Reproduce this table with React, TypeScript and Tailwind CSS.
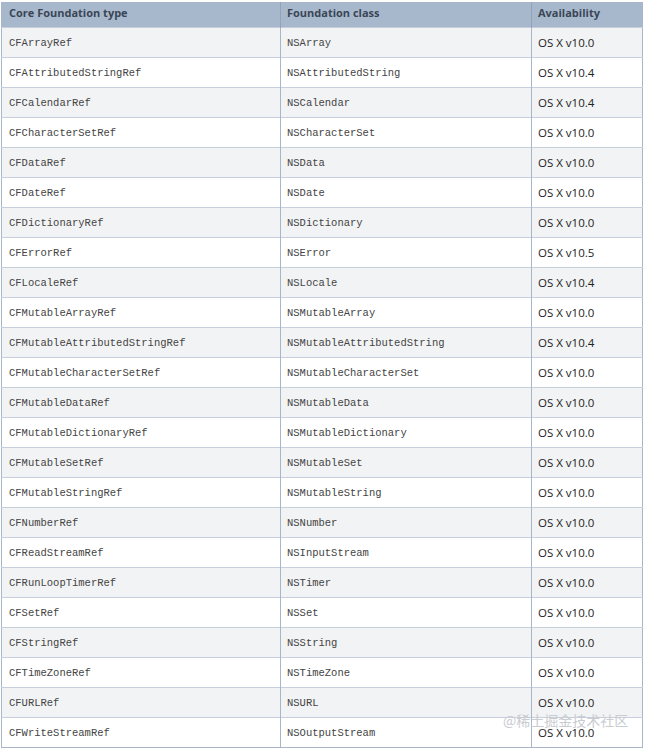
const ROWS: [string, string, string][] = [
  ['CFArrayRef', 'NSArray', 'OS X v10.0'],
  ['CFAttributedStringRef', 'NSAttributedString', 'OS X v10.4'],
  ['CFCalendarRef', 'NSCalendar', 'OS X v10.4'],
  ['CFCharacterSetRef', 'NSCharacterSet', 'OS X v10.0'],
  ['CFDataRef', 'NSData', 'OS X v10.0'],
  ['CFDateRef', 'NSDate', 'OS X v10.0'],
  ['CFDictionaryRef', 'NSDictionary', 'OS X v10.0'],
  ['CFErrorRef', 'NSError', 'OS X v10.5'],
  ['CFLocaleRef', 'NSLocale', 'OS X v10.4'],
  ['CFMutableArrayRef', 'NSMutableArray', 'OS X v10.0'],
  ['CFMutableAttributedStringRef', 'NSMutableAttributedString', 'OS X v10.4'],
  ['CFMutableCharacterSetRef', 'NSMutableCharacterSet', 'OS X v10.0'],
  ['CFMutableDataRef', 'NSMutableData', 'OS X v10.0'],
  ['CFMutableDictionaryRef', 'NSMutableDictionary', 'OS X v10.0'],
  ['CFMutableSetRef', 'NSMutableSet', 'OS X v10.0'],
  ['CFMutableStringRef', 'NSMutableString', 'OS X v10.0'],
  ['CFNumberRef', 'NSNumber', 'OS X v10.0'],
  ['CFReadStreamRef', 'NSInputStream', 'OS X v10.0'],
  ['CFRunLoopTimerRef', 'NSTimer', 'OS X v10.0'],
  ['CFSetRef', 'NSSet', 'OS X v10.0'],
  ['CFStringRef', 'NSString', 'OS X v10.0'],
  ['CFTimeZoneRef', 'NSTimeZone', 'OS X v10.0'],
  ['CFURLRef', 'NSURL', 'OS X v10.0'],
  ['CFWriteStreamRef', 'NSOutputStream', 'OS X v10.0'],
]

export default function App() {
  return (
    <div className="relative h-[749px] w-[645px] overflow-hidden bg-white pl-[1px] pt-[2px]">
      <table className="w-[641px] table-fixed border-collapse border border-[#a9b6c8]">
        <colgroup>
          <col className="w-[279px]" />
          <col className="w-[251px]" />
          <col className="w-[111px]" />
        </colgroup>
        <thead>
          <tr className="h-[25px] bg-[#a8b8cc] text-left font-['Open_Sans','Liberation_Sans',sans-serif] text-[11px] font-bold text-[#3a4656]">
            <th className="border-r border-[#93a3b8] px-[7px] pb-[4px] align-middle">Core Foundation type</th>
            <th className="border-r border-[#93a3b8] px-[6px] pb-[4px] align-middle">Foundation class</th>
            <th className="px-[6px] pb-[4px] align-middle">Availability</th>
          </tr>
        </thead>
        <tbody>
          {ROWS.map(([cf, ns, av], i) => (
            <tr
              key={cf}
              className={`h-[30px] border-t border-[#c6cfdb] ${i % 2 === 0 ? 'bg-[#f2f3f4]' : 'bg-white'}`}
            >
              <td className="border-r border-[#a9b6c8] px-[7px] pt-[3px] font-['Liberation_Mono',monospace] text-[10.5px] text-[#444]">
                {cf}
              </td>
              <td className="border-r border-[#a9b6c8] px-[6px] pt-[3px] font-['Liberation_Mono',monospace] text-[10.5px] text-[#444]">
                {ns}
              </td>
              <td className="px-[6px] font-['Open_Sans','Liberation_Sans',sans-serif] text-[11.5px] text-[#222]">
                {av}
              </td>
            </tr>
          ))}
        </tbody>
      </table>
      {/* watermark */}
      <div className="absolute left-[503px] top-[710px] font-['Noto_Sans_CJK_SC',sans-serif] text-[14px] text-[#c9ccd1]">
        @稀土掘金技术社区
      </div>
    </div>
  )
}
